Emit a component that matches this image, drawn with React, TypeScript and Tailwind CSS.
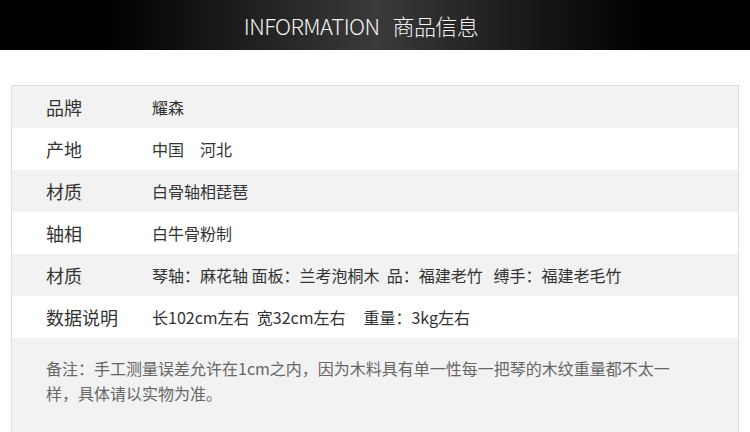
const ROWS: { label: string; value: string }[] = [
  { label: "品牌", value: "耀森" },
  { label: "产地", value: "中国　河北" },
  { label: "材质", value: "白骨轴相琵琶" },
  { label: "轴相", value: "白牛骨粉制" },
  { label: "材质", value: "琴轴：麻花轴 面板：兰考泡桐木  品：福建老竹   缚手：福建老毛竹" },
  { label: "数据说明", value: "长102cm左右  宽32cm左右     重量：3kg左右" },
];

export default function App() {
  return (
    <div
      className="h-[432px] w-[750px] overflow-hidden bg-white"
      style={{ fontFamily: '"Noto Sans CJK SC", "Noto Sans", sans-serif' }}
    >
      <header className="flex h-[50px] items-center justify-center pr-[28px] bg-[linear-gradient(to_right,#000_14%,#3a3a3a_50%,#000_86%)]">
        <h1 className="whitespace-pre text-[22px] font-light tracking-tight text-[#f2f2f2]">INFORMATION   商品信息</h1>
      </header>

      <section className="mx-[11px] mt-[35px] border border-[#dddddd] text-[#333]">
        {ROWS.map((r, i) => (
          <div
            key={i}
            className={`flex h-[42px] items-center ${i % 2 === 0 ? "bg-[#f2f2f2]" : "bg-white"}`}
          >
            <div className="w-[140px] pl-[34px] text-[18px]">{r.label}</div>
            <div className="whitespace-pre text-[16px]">{r.value}</div>
          </div>
        ))}
        <div className="h-[120px] bg-[#f2f2f2] pl-[34px] pt-[18px]">
          <p className="w-[624px] text-[16px] leading-[25px] text-[#666]">
            备注：手工测量误差允许在1cm之内，因为木料具有单一性每一把琴的木纹重量都不太一样，具体请以实物为准。
          </p>
        </div>
      </section>
    </div>
  );
}
